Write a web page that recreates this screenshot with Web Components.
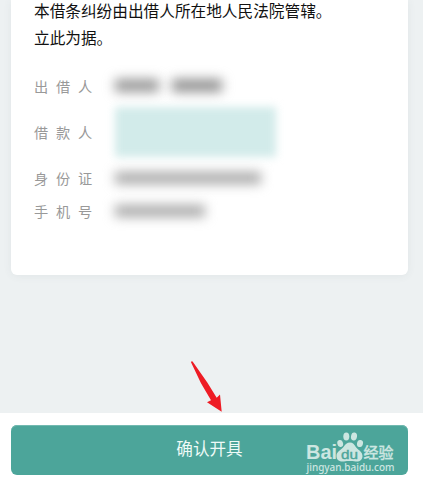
<!DOCTYPE html>
<html lang="zh-CN">
<head>
<meta charset="utf-8">
<title>借条</title>
<style>
html, body { margin: 0; height: 100%; overflow: hidden; }
body { font-family: "Noto Sans CJK SC", "Noto Sans", sans-serif; background: #edf1f2; }
</style>
</head>
<body>
<iou-page>
  <iou-card>
    <iou-clause>本借条纠纷由出借人所在地人民法院管辖。</iou-clause>
    <iou-clause>立此为据。</iou-clause>
    <iou-field slot="fields" style="--h:31px"><span>出借人</span><blur-bar slot="value" style="--w:44px;--h:13px;--c:#999"></blur-bar><blur-bar slot="value" style="--w:50px;--h:13px;--c:#929292;--m:13px"></blur-bar></iou-field>
    <iou-field slot="fields" style="--h:61px"><span>借款人</span><blur-bar slot="value" style="--w:161px;--h:50px;--c:#d2ebea;--b:4px"></blur-bar></iou-field>
    <iou-field slot="fields" style="--h:32px"><span>身份证</span><blur-bar slot="value" style="--w:146px;--h:12px;--c:#aaa"></blur-bar></iou-field>
    <iou-field slot="fields" style="--h:34px"><span>手机号</span><blur-bar slot="value" style="--w:90px;--h:12px;--c:#aaa"></blur-bar></iou-field>
  </iou-card>
  <pointer-arrow slot="overlay"></pointer-arrow>
  <confirm-bar slot="footer">确认开具<site-mark slot="mark"></site-mark></confirm-bar>
</iou-page>
<script>
function define(name, html) {
  const template = document.createElement('template');
  template.innerHTML = html;
  customElements.define(name, class extends HTMLElement {
    constructor() {
      super();
      this.attachShadow({ mode: 'open' }).append(template.content.cloneNode(true));
    }
  });
}

define('iou-page', `<style>
:host { position: relative; display: flex; flex-direction: column; width: 423px; height: 485px; background: #edf1f2; overflow: hidden; }
main { flex: 1; padding: 0 15px 0 11px; }
</style><main><slot></slot></main><slot name="footer"></slot><slot name="overlay"></slot>`);

define('iou-card', `<style>
:host { display: block; box-sizing: border-box; height: 275px; padding: 0 23px; background: #fff; border-radius: 0 0 6px 6px; box-shadow: 0 1px 9px rgba(65,90,95,.07); }
.fields { padding-top: 16px; }
</style><slot></slot><div class="fields"><slot name="fields"></slot></div>`);

define('iou-clause', `<style>
:host { display: block; height: 27px; line-height: 22px; font-size: 15.66px; color: #111; white-space: nowrap; }
</style><slot></slot>`);

define('iou-field', `<style>
:host { display: flex; align-items: center; height: var(--h); color: #999; font-size: 14.2px; line-height: 20px; }
.label { width: 81px; letter-spacing: 7.8px; white-space: nowrap; }
.value { display: flex; align-items: center; }
</style><div class="label"><slot></slot></div><div class="value"><slot name="value"></slot></div>`);

define('blur-bar', `<style>
:host { display: block; width: var(--w); height: var(--h); margin-left: var(--m, 0); background: var(--c); filter: blur(var(--b, 6px)); }
</style>`);

define('confirm-bar', `<style>
:host { display: block; box-sizing: border-box; height: 72px; padding: 12px 15px 10px 11px; background: #fff; }
button { position: relative; display: block; width: 100%; height: 50px; padding: 0; border: 0; border-radius: 6px; background: #4ca59a; color: #eefaf7; font: 16.6px/42px "Noto Sans CJK SC", sans-serif; box-shadow: inset 0 1px #72b9b0; }
.label { display: block; height: 46px; }
</style><button><span class="label"><slot></slot></span><slot name="mark"></slot></button>`);

define('site-mark', `<style>
:host { position: absolute; left: 293px; top: 4px; width: 94px; height: 46px; }
svg { display: block; }
</style><svg width="94" height="46" viewBox="0 0 94 46" fill="#cce6e1">
<text x="2" y="30" font-family="Liberation Sans, sans-serif" font-size="20" font-weight="bold" textLength="31" lengthAdjust="spacingAndGlyphs">Bai</text>
<ellipse cx="36.200" cy="14.500" rx="2.900" ry="3.500" transform="rotate(-12 36.200 14.500)"/>
<ellipse cx="42.300" cy="7.500" rx="3" ry="4"/>
<ellipse cx="50" cy="7.500" rx="3" ry="4" transform="rotate(10 50 7.500)"/>
<ellipse cx="56" cy="14.500" rx="3" ry="3.600" transform="rotate(12 56 14.500)"/>
<path d="M46 13.500c-3 0-4.700 2-6.300 4.200-2 2.800-7.200 4.500-7.200 9.200 0 4.200 3.400 6 7.400 5.500 3.900-.6 7.800-.6 11.600 0 4.200.5 7-1.700 7-5.500 0-4.500-4.700-6.200-6.700-9-1.500-2.300-3-4.400-5.800-4.400z"/>
<text x="37" y="29.500" font-family="Liberation Sans, sans-serif" font-size="13.500" fill="#4ca59a" stroke="#4ca59a" stroke-width=".4" textLength="17" lengthAdjust="spacingAndGlyphs">du</text>
<text x="59.500" y="28.500" font-family="Noto Sans CJK SC, sans-serif" font-size="15" font-weight="500" stroke="#cce6e1" stroke-width=".3" textLength="30" lengthAdjust="spacingAndGlyphs">经验</text>
<text x="2.500" y="42" font-family="Noto Sans, sans-serif" font-size="10" font-weight="500" textLength="88" lengthAdjust="spacingAndGlyphs">jingyan.baidu.com</text>
</svg>`);

define('pointer-arrow', `<style>
:host { position: absolute; left: 190px; top: 360px; width: 33px; height: 53px; }
svg { display: block; }
</style><svg width="33" height="53" viewBox="0 0 33 53"><path fill="#ee1c25" d="M1 2.200Q1.400 .8 2.600 1.500L17.300 22.500 26.700 37.700 30 34.500 31.700 51.800 17 42.300 21 40.200 11 23.300Z"/></svg>`);
</script>
</body>
</html>
